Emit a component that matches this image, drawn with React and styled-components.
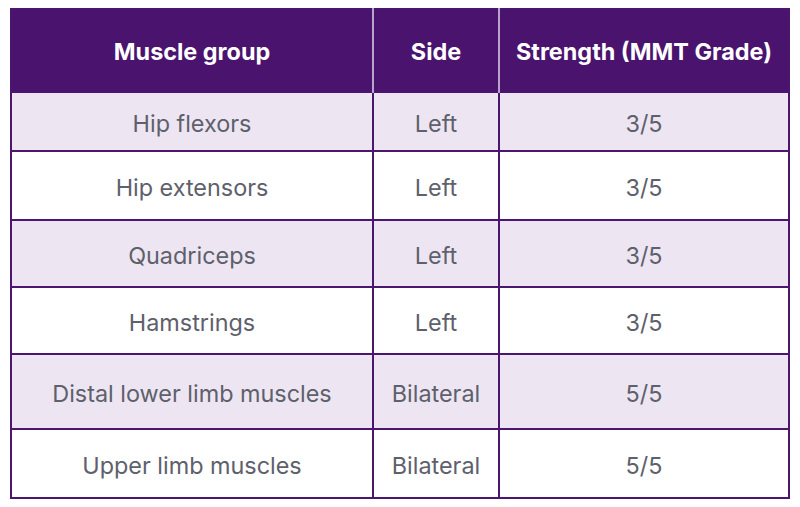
import React from 'react';
import styled, { createGlobalStyle } from 'styled-components';

const GlobalStyle = createGlobalStyle`
  html, body {
    margin: 0;
    padding: 0;
    background: #ffffff;
  }
  body {
    font-family: Inter, 'Noto Sans', sans-serif;
  }
`;

const rows = [
  { muscle: 'Hip flexors', side: 'Left', grade: '3/5', height: 59 },
  { muscle: 'Hip extensors', side: 'Left', grade: '3/5', height: 69 },
  { muscle: 'Quadriceps', side: 'Left', grade: '3/5', height: 67 },
  { muscle: 'Hamstrings', side: 'Left', grade: '3/5', height: 67 },
  { muscle: 'Distal lower limb muscles', side: 'Bilateral', grade: '5/5', height: 75 },
  { muscle: 'Upper limb muscles', side: 'Bilateral', grade: '5/5', height: 69 },
];

export default function App() {
  return (
    <Page>
      <GlobalStyle />
      <Table>
        <thead>
          <tr>
            <Th>Muscle group</Th>
            <Th>Side</Th>
            <Th>Strength (MMT Grade)</Th>
          </tr>
        </thead>
        <tbody>
          {rows.map(({ muscle, side, grade, height }, index) => (
            <Row key={index} $shaded={index % 2 === 0} $height={height}>
              <Td>{muscle}</Td>
              <Td>{side}</Td>
              <Td>{grade}</Td>
            </Row>
          ))}
        </tbody>
      </Table>
    </Page>
  );
}

const Page = styled.div`
  padding: 8px 10px;
  width: 800px;
  box-sizing: border-box;
`;

const Table = styled.table`
  width: 780px;
  border-collapse: collapse;
  table-layout: fixed;
  background: #ffffff;
  border: 2px solid #4b1670;
`;

const Th = styled.th`
  height: 83px;
  padding: 2px 4px 0;
  background: #4a136d;
  color: #ffffff;
  font-size: 23.4px;
  font-weight: 700;
  text-align: center;
  vertical-align: middle;
  border-left: 2px solid #b8a3cc;
  box-sizing: border-box;

  &:first-child {
    width: 362px;
    border-left: none;
  }
  &:nth-child(2) {
    width: 126px;
  }
`;

const Row = styled.tr`
  height: ${(p) => p.$height}px;
  background: ${(p) => (p.$shaded ? '#ede6f2' : '#ffffff')};
`;

const Td = styled.td`
  border: 2px solid #4b1670;
  padding: 4px 4px 0;
  color: #5e606b;
  font-size: 23.4px;
  font-weight: 400;
  text-align: center;
  vertical-align: middle;
`;
